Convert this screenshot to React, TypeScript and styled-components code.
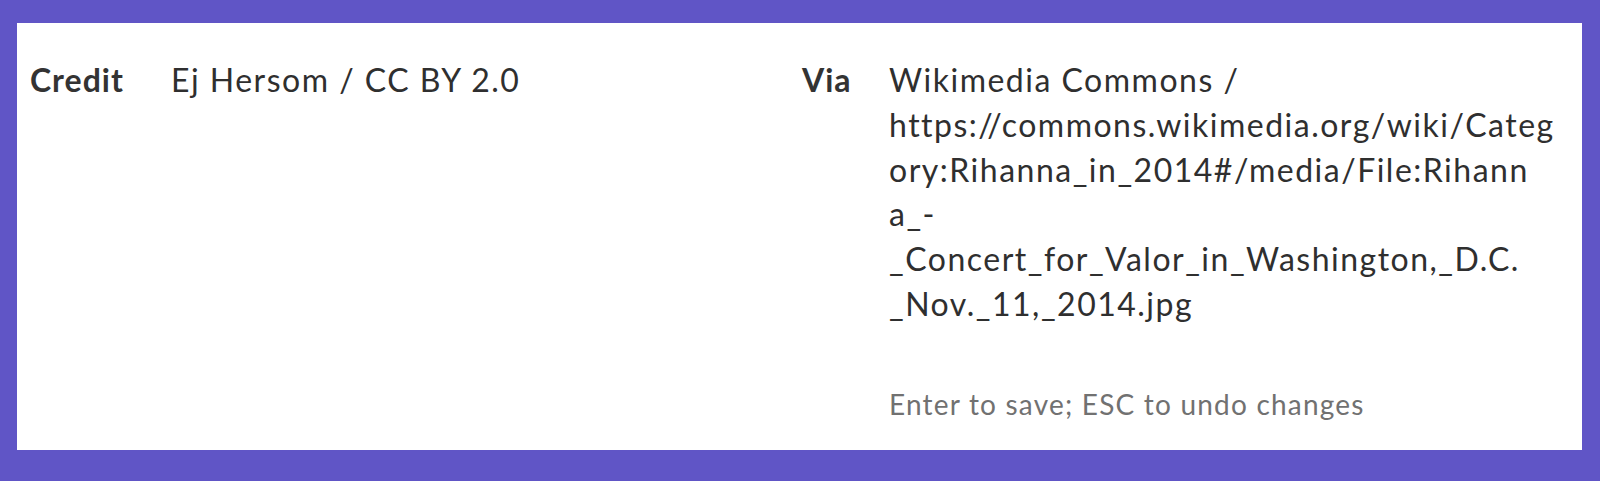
import React from 'react';
import styled, { createGlobalStyle } from 'styled-components';

const GlobalStyle = createGlobalStyle`
  html, body {
    margin: 0;
    padding: 0;
    background: #6055c6;
  }
  body {
    font-family: Lato, "Liberation Sans", sans-serif;
    color: #333;
  }
`;

const Page = styled.div`
  padding: 23px 18px 32px 17px;
`;

const Panel = styled.div`
  background: #fff;
  padding: 35px 20px 26px 13px;
  display: grid;
  grid-template-columns: 772px 1fr;
`;

const Field = styled.div`
  display: flex;
  align-items: flex-start;
`;

const Label = styled.div<{ $width: number }>`
  flex: none;
  width: ${({ $width }) => $width}px;
  font-size: 32px;
  line-height: 44.8px;
  font-weight: 700;
  letter-spacing: 1px;
  color: #333;
`;

const ValueBox = styled.div`
  flex: 1;
  min-width: 0;
`;

const Value = styled.div`
  font-size: 32px;
  line-height: 44.8px;
  letter-spacing: 1.5px;
  color: #2f2f2f;
`;

const Hint = styled.div`
  margin-top: 58px;
  font-size: 28px;
  line-height: 39px;
  letter-spacing: 1.2px;
  color: #717171;
`;

// lines as they wrap in the original
const viaLines = [
  'Wikimedia Commons /',
  'https://commons.wikimedia.org/wiki/Categ',
  'ory:Rihanna_in_2014#/media/File:Rihann',
  'a_-',
  '_Concert_for_Valor_in_Washington,_D.C.',
  '_Nov._11,_2014.jpg',
];

export default function App() {
  return (
    <>
      <GlobalStyle />
      <Page>
        <Panel>
          <Field>
            <Label $width={141}>Credit</Label>
            <ValueBox>
              <Value>Ej Hersom / CC BY 2.0</Value>
            </ValueBox>
          </Field>
          <Field>
            <Label $width={87}>Via</Label>
            <ValueBox>
              <Value>
                {viaLines.map((line, i) => (
                  <React.Fragment key={i}>
                    {line}
                    {i < viaLines.length - 1 && <br />}
                  </React.Fragment>
                ))}
              </Value>
              <Hint>Enter to save; ESC to undo changes</Hint>
            </ValueBox>
          </Field>
        </Panel>
      </Page>
    </>
  );
}
